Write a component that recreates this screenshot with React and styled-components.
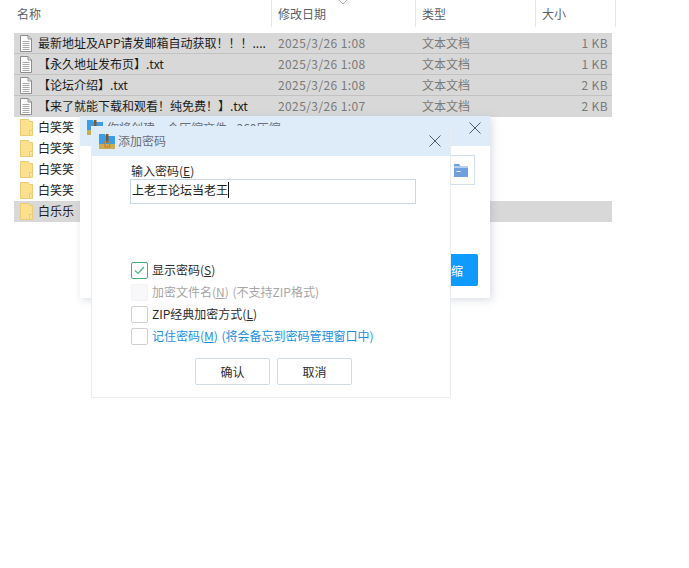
import React from 'react'
import styled, { createGlobalStyle } from 'styled-components'

const GlobalStyle = createGlobalStyle`
  html, body {
    margin: 0;
    padding: 0;
    background: #fff;
    overflow: hidden;
  }
  * {
    box-sizing: border-box;
  }
  body {
    font-family: "Noto Sans CJK SC", "Noto Sans", sans-serif;
    font-size: 12px;
  }
`

const Page = styled.div`
  position: relative;
  width: 689px;
  height: 568px;
`

const Header = styled.div`
  display: flex;
  height: 27px;
  margin-bottom: 6px;
`

const HeaderCell = styled.div`
  position: relative;
  display: flex;
  align-items: center;
  width: ${p => p.$width}px;
  padding-left: ${p => p.$pad || 6}px;
  border-right: 1px solid #e6e6e6;
  color: #5a5f6b;
  line-height: 26px;
`

const SortCaret = styled.svg`
  position: absolute;
  left: 66px;
  top: 0;
`

const List = styled.div`
  width: 598px;
  margin-left: 14px;
`

const Row = styled.div`
  display: grid;
  grid-template-columns: 264px 144px 120px 70px;
  align-items: start;
  height: 21px;
  padding-top: 1px;
  line-height: 18px;
  background: ${p => (p.$selected ? '#d8d8d8' : 'transparent')};
  box-shadow: ${p => (p.$line ? 'inset 0 -1px 0 #c2c2c2' : 'none')};
`

const NameCell = styled.div`
  display: flex;
  align-items: center;
  gap: 6px;
  padding-left: 6px;
  color: #1c1c1c;
  white-space: nowrap;
  overflow: hidden;
`

const Muted = styled.div`
  color: #7a7a7a;
  white-space: nowrap;
`

const DateCell = styled(Muted)`
  letter-spacing: 0.4px;
`

const SizeCell = styled(Muted)`
  padding-right: 4px;
  text-align: right;
  letter-spacing: 0.4px;
`

const Dialog = styled.div`
  position: absolute;
  left: ${p => p.$left}px;
  top: ${p => p.$top}px;
  width: ${p => p.$width}px;
  height: ${p => p.$height}px;
  background: #fff;
`

const BackDialog = styled(Dialog)`
  box-shadow: 2px 2px 8px rgba(120, 130, 150, 0.28);
  display: flex;
  flex-direction: column;
`

const FrontDialog = styled(Dialog)`
  border: 1px solid #e8edf3;
  border-top: none;
  display: flex;
  flex-direction: column;
`

const TitleBar = styled.div`
  display: flex;
  align-items: ${p => (p.$top ? 'flex-start' : 'center')};
  flex: none;
  height: 30px;
  padding: ${p => (p.$top ? '3px 9px 0 7px' : '0 9px 0 7px')};
  background: #deecfa;
  color: #6a6f78;
  gap: ${p => (p.$top ? 4 : 3)}px;
`

const TitleText = styled.span`
  flex: 1;
  white-space: nowrap;
  line-height: 18px;
`

const BackBody = styled.div`
  display: flex;
  flex-direction: column;
  align-items: flex-end;
  padding: 9px 12px 0 0;
`

const FolderButton = styled.div`
  display: flex;
  align-items: center;
  justify-content: flex-end;
  width: 40px;
  height: 30px;
  margin-right: 3px;
  padding-right: 6px;
  border: 1px solid #d5e0ea;
`

const PrimaryButton = styled.div`
  display: flex;
  align-items: center;
  justify-content: flex-end;
  width: 100px;
  height: 32px;
  margin-top: 69px;
  padding-right: 15px;
  background: #0f9bfd;
  border-radius: 2px;
  color: #fff;
`

const FrontBody = styled.div`
  display: flex;
  flex-direction: column;
  flex: 1;
  padding: 7px 0 0 38px;
`

const FieldLabel = styled.label`
  height: 16px;
  padding-left: 1px;
  line-height: 16px;
  color: #2c2c2c;
`

const PasswordBox = styled.div`
  display: flex;
  align-items: center;
  width: 286px;
  height: 25px;
  padding: 0 0 4px 1px;
  border: 1px solid #c5d8e4;
  color: #1c1c1c;
`

const Caret = styled.span`
  width: 1px;
  height: 16px;
  background: #111;
`

const Options = styled.div`
  display: flex;
  flex-direction: column;
  margin-top: 55px;
`

const Option = styled.div`
  display: flex;
  align-items: center;
  gap: 4px;
  height: 22px;
  color: ${p => (p.$tone === 'disabled' ? '#a6a6a6' : p.$tone === 'link' ? '#1b8fe2' : '#2c2c2c')};
`

const OptionText = styled.span`
  margin-bottom: 2px;
  word-spacing: 1px;
`

const Check = styled.span`
  display: flex;
  align-items: center;
  justify-content: center;
  width: 17px;
  height: 17px;
  margin-left: 1px;
  border-radius: 2px;
  border: 1px solid ${p => (p.$checked ? '#3fb37c' : p.$disabled ? '#f3f3f6' : '#cfcfd4')};
  background: ${p => (p.$disabled ? '#f8f8fa' : '#fff')};
`

const Actions = styled.div`
  display: flex;
  gap: 7px;
  margin: 11px 0 0 65px;
`

const ActionButton = styled.div`
  display: flex;
  align-items: center;
  justify-content: center;
  width: 75px;
  height: 27px;
  border: 1px solid #cfdbe6;
  border-radius: 2px;
  color: #2c2c2c;
`

const CloseSvg = styled.svg`
  flex: none;
  margin-top: ${p => p.$drop || 0}px;
`

const FileIcon = () => (
  <svg width="12" height="17" viewBox="0 0 12 17" style={{ flex: 'none' }}>
    <path d="M.5.5h7.500l3.500 3.500v12.500h-11z" fill="#fdfdfd" stroke="#8d8d8d" />
    <path d="M8 .5v3.500h3.500" fill="none" stroke="#8d8d8d" />
    <path d="M2.500 6.500h7M2.500 8.500h7M2.500 10.500h7M2.500 12.500h7M2.500 14.500h7" stroke="#a8a8a8" />
  </svg>
)

const FolderIcon = () => (
  <svg width="13" height="17" viewBox="0 0 13 17" style={{ flex: 'none', marginRight: -1 }}>
    <path d="M.5.5h8l1 2h3v14h-12z" fill="#fde08e" stroke="#eccb78" />
    <path d="M9.500 16.500v-5h3" fill="#fbe7ae" stroke="#eccb78" />
  </svg>
)

const ArchiveIcon = () => (
  <svg width="16" height="17" viewBox="0 0 16 17" style={{ flex: 'none' }}>
    <path d="M0 1h6l1 2h9v9H0z" fill="#3b9ce8" />
    <path d="M0 11h16v5H0z" fill="#c7ad58" />
    <path d="M7 1h2.500v9H7z" fill="#7a5a2c" />
    <rect x="6" y="9" width="4.500" height="5" fill="none" stroke="#d4801f" strokeWidth="1.200" />
  </svg>
)

const CloseIcon = ({ drop }) => (
  <CloseSvg $drop={drop} width="12" height="12" viewBox="0 0 12 12">
    <path d="M.5.500l11 11M11.500.500l-11 11" stroke="#555b63" strokeWidth="1" fill="none" />
  </CloseSvg>
)

const files = [
  { name: '最新地址及APP请发邮箱自动获取！！！....', time: '1:08', size: '1 KB' },
  { name: '【永久地址发布页】.txt', time: '1:08', size: '1 KB' },
  { name: '【论坛介绍】.txt', time: '1:08', size: '2 KB' },
  { name: '【来了就能下载和观看！纯免费！】.txt', time: '1:07', size: '2 KB' },
]

const folders = ['白笑笑', '白笑笑', '白笑笑', '白笑笑', '白乐乐']

const App = () => {
  return (
    <Page>
      <GlobalStyle />
      <Header>
        <HeaderCell $width={272} $pad={17}>名称</HeaderCell>
        <HeaderCell $width={144}>
          修改日期
          <SortCaret width="10" height="5" viewBox="0 0 10 5">
            <path d="M1 0l4 4 4-4" fill="none" stroke="#a9b0b8" />
          </SortCaret>
        </HeaderCell>
        <HeaderCell $width={120}>类型</HeaderCell>
        <HeaderCell $width={80}>大小</HeaderCell>
      </Header>

      <List>
        {files.map((f, i) => (
          <Row key={f.name} $selected $line={i < files.length - 1}>
            <NameCell><FileIcon />{f.name}</NameCell>
            <DateCell>2025/3/26 {f.time}</DateCell>
            <Muted>文本文档</Muted>
            <SizeCell>{f.size}</SizeCell>
          </Row>
        ))}
        {folders.map((name, i) => (
          <Row key={i} $selected={i === folders.length - 1}>
            <NameCell><FolderIcon />{name}</NameCell>
          </Row>
        ))}
      </List>

      <BackDialog $left={80} $top={116} $width={410} $height={182}>
        <TitleBar $top>
          <ArchiveIcon />
          <TitleText>你将创建一个压缩文件 - 360压缩</TitleText>
          <CloseIcon drop={3} />
        </TitleBar>
        <BackBody>
          <FolderButton>
            <svg width="14" height="13" viewBox="0 0 14 13">
              <path d="M0 0h5l1.500 2H14v11H0z" fill="#6f9fdf" />
              <path d="M0 2.500h14v1H0z" fill="#fff" />
              <path d="M2.500 7h4v1h-4z" fill="#fff" />
            </svg>
          </FolderButton>
          <PrimaryButton>缩</PrimaryButton>
        </BackBody>
      </BackDialog>

      <FrontDialog $left={91} $top={126} $width={360} $height={272}>
        <TitleBar>
          <ArchiveIcon />
          <TitleText>添加密码</TitleText>
          <CloseIcon />
        </TitleBar>
        <FrontBody>
          <FieldLabel>输入密码(<u>E</u>)</FieldLabel>
          <PasswordBox>上老王论坛当老王<Caret /></PasswordBox>
          <Options>
            <Option>
              <Check $checked>
                <svg width="11" height="9" viewBox="0 0 11 9">
                  <path d="M1 4.500l3 3 6-6.500" fill="none" stroke="#4cb884" strokeWidth="1.200" />
                </svg>
              </Check>
              <OptionText>显示密码(<u>S</u>)</OptionText>
            </Option>
            <Option $tone="disabled">
              <Check $disabled />
              <OptionText>加密文件名(<u>N</u>) (不支持ZIP格式)</OptionText>
            </Option>
            <Option>
              <Check />
              <OptionText>ZIP经典加密方式(<u>L</u>)</OptionText>
            </Option>
            <Option $tone="link">
              <Check />
              <OptionText>记住密码(<u>M</u>) (将会备忘到密码管理窗口中)</OptionText>
            </Option>
          </Options>
          <Actions>
            <ActionButton>确认</ActionButton>
            <ActionButton>取消</ActionButton>
          </Actions>
        </FrontBody>
      </FrontDialog>
    </Page>
  )
}

export default App
